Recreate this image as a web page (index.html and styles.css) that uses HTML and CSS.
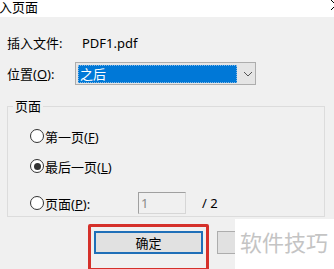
FILE: index.html
```html
<!DOCTYPE html>
<html lang="zh-CN">
<head>
  <meta charset="UTF-8">
  <title>插入页面</title>
  <link rel="stylesheet" href="styles.css">
</head>
<body>
  <div class="titlebar">
    <span class="title">入页面</span>
    <svg class="close" width="12" height="12" viewBox="0 0 12 12">
      <path d="M1 1 L11 11 M11 1 L1 11" stroke="#000" stroke-width="1" fill="none"/>
    </svg>
  </div>

  <div class="content">
    <div class="row">
      <span class="label">插入文件:</span>
      <span class="value">PDF1.pdf</span>
    </div>

    <div class="row">
      <span class="label">位置(<u>O</u>):</span>
      <div class="select">
        <div class="select_value">之后</div>
        <svg class="chevron" width="10" height="6" viewBox="0 0 10 6">
          <path d="M1 1 L5 5 L9 1" stroke="#555" stroke-width="1" fill="none"/>
        </svg>
      </div>
    </div>

    <fieldset class="group">
      <legend>页面</legend>

      <div class="radio_row first">
        <span class="radio"></span>
        <span class="radio_text">第一页(<u>F</u>)</span>
      </div>

      <div class="radio_row">
        <span class="radio checked"></span>
        <span class="radio_text">最后一页(<u>L</u>)</span>
      </div>

      <div class="radio_row pages">
        <span class="radio"></span>
        <span class="radio_text wide">页面(<u>P</u>):</span>
        <div class="page_input">1</div>
        <span class="page_total">/ 2</span>
      </div>
    </fieldset>

    <div class="buttons">
      <div class="highlight">
        <button class="btn primary">确定</button>
      </div>
      <!-- cancel button, hidden under the watermark -->
      <button class="btn"></button>
    </div>
  </div>

  <div class="watermark">软件技巧</div>
</body>
</html>
```

FILE: styles.css
```css
body {
  margin: 0;
  width: 334px;
  height: 269px;
  overflow: hidden;
  position: relative;
  background: #f0f0f0;
  font-family: "Noto Sans", "Noto Sans CJK SC", sans-serif;
  font-size: 13px;
  color: #000;
}

.titlebar {
  height: 17px;
  background: #ffffff;
  display: flex;
  justify-content: space-between;
  align-items: flex-start;
  overflow: hidden;
}

.title {
  font-size: 13px;
  line-height: 14px;
  margin-left: -1px;
}

.close {
  margin-right: -8px;
  margin-top: -1px;
}

.content {
  padding-left: 7px;
}

.row {
  display: flex;
  align-items: center;
  height: 23px;
}

.row:first-child {
  margin-top: 14px;
  margin-bottom: 8px;
}

.label {
  width: 68px;
}

.value {
  padding-left: 7px;
}

.select {
  width: 179px;
  height: 21px;
  border: 1px solid #adadad;
  background: #e5e5e5;
  display: flex;
  align-items: center;
}

.select_value {
  width: 156px;
  height: 16px;
  margin-left: 2px;
  background: #0078d7;
  border: 1px dotted #7fb6e6;
  color: #ffffff;
  line-height: 16px;
  padding-left: 1px;
}

.chevron {
  margin-left: 6px;
}

.group {
  margin: 13px 0 0 0;
  width: 318px;
  height: 119px;
  box-sizing: border-box;
  padding: 0;
  border: 1px solid #dcdcdc;
}

.group legend {
  padding: 0 2px;
  margin-left: 5px;
  line-height: 16px;
}

.radio_row {
  display: flex;
  align-items: center;
  height: 20px;
  padding-left: 22px;
  margin-top: 10px;
}

.radio_row.first {
  margin-top: 12px;
}

.radio_row.pages {
  height: 22px;
  margin-top: 16px;
}

.radio {
  width: 12px;
  height: 12px;
  border: 1px solid #333;
  border-radius: 50%;
  background: #ffffff;
  display: flex;
  align-items: center;
  justify-content: center;
}

.radio.checked::after {
  content: "";
  width: 7px;
  height: 7px;
  border-radius: 50%;
  background: #333;
}

.radio_text {
  margin-left: 1px;
}

.radio_text.wide {
  width: 93px;
}

.page_input {
  width: 44px;
  height: 20px;
  border: 1px solid #a0a0a0;
  border-right-color: #d6d6d6;
  border-bottom-color: #d6d6d6;
  background: #f0f0f0;
  color: #8a8a8a;
  line-height: 20px;
  padding-left: 2px;
}

.page_total {
  margin-left: 16px;
}

.buttons {
  display: flex;
  align-items: flex-start;
  gap: 8px;
  margin-top: 7px;
  margin-left: 81px;
}

.highlight {
  border: 3px solid #d5302a;
  border-radius: 2px;
  padding: 4px 3px 14px 3px;
}

.btn {
  width: 109px;
  height: 23px;
  border: 1px solid #adadad;
  background: #e1e1e1;
  font: inherit;
  padding: 0;
}

.buttons > .btn {
  margin-top: 7px;
}

.btn.primary {
  border: 2px solid #1f6fb8;
}

.watermark {
  position: absolute;
  left: 235px;
  top: 219px;
  right: 0;
  bottom: 0;
  background: #ffffff;
  color: #c4c4c4;
  font-size: 22px;
  line-height: 26px;
  padding: 10px 0 0 5px;
  white-space: nowrap;
}
```
